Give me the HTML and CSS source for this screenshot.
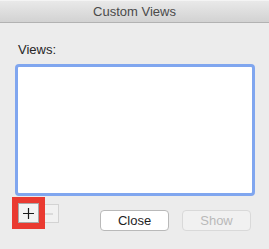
FILE: index.html
```html
<!DOCTYPE html>
<html lang="en">
<head>
    <meta charset="UTF-8">
    <meta name="viewport" content="width=device-width, initial-scale=1.0">
    <title>Custom Views</title>
    <link rel="stylesheet" href="styles.css">
</head>
<body>
    <div class="window">
        <div class="titlebar">Custom Views</div>
        <div class="content">
            <div class="label">Views:</div>
            <div class="list-box"></div>
            <div class="footer">
                <div class="segmented">
                    <button class="seg-btn add">
                        <svg width="11" height="11" viewBox="0 0 11 11">
                            <path d="M5.5 0V11M0 5.5H11" stroke="#1a1a1a" stroke-width="1.2" fill="none"/>
                        </svg>
                    </button>
                    <button class="seg-btn remove" disabled>
                        <svg width="8" height="2" viewBox="0 0 8 2">
                            <path d="M0 1H8" stroke="#c4c4c4" stroke-width="1" fill="none"/>
                        </svg>
                    </button>
                </div>
                <div class="buttons">
                    <button class="push">Close</button>
                    <button class="push" disabled>Show</button>
                </div>
            </div>
        </div>
    </div>
</body>
</html>
```

FILE: styles.css
```css
body {
    margin: 0;
    padding: 0;
    font-family: "Liberation Sans", Arial, sans-serif;
    background: #ececec;
}
.window {
    width: 269px;
    height: 249px;
    background: #ececec;
    overflow: hidden;
}
.titlebar {
    height: 21px;
    line-height: 22px;
    text-align: center;
    font-size: 13px;
    color: #4a4a4a;
    background: linear-gradient(#e9e9e9, #d2d2d2);
    border-top: 1px solid #f4f4f4;
    border-bottom: 1px solid #b2b2b2;
    box-sizing: border-box;
    height: 23px;
}
.content {
    padding: 0 14px 0 15px;
}
.label {
    margin-top: 19px;
    height: 16px;
    line-height: 16px;
    padding-left: 3px;
    font-size: 13px;
    color: #262626;
}
.list-box {
    margin-top: 6px;
    width: 240px;
    height: 132px;
    box-sizing: border-box;
    border: 3px solid #80a6ef;
    border-radius: 4px;
    background: #ffffff;
}
.footer {
    display: flex;
    align-items: flex-start;
}
.segmented {
    display: flex;
    margin-top: 7px;
    margin-left: 3px;
}
.seg-btn {
    display: flex;
    align-items: center;
    justify-content: center;
    padding: 0;
    width: 21px;
    height: 20px;
    border: 1px solid #a9a9a9;
    background: #f3f3f3;
}
.seg-btn.add {
    outline: 6px solid #ea3a31;
    position: relative;
    z-index: 1;
}
.seg-btn.remove {
    width: 20px;
    height: 19px;
    margin-top: 1px;
    border-color: #d3d3d3;
    border-left: none;
    background: #f1f1f1;
}
.buttons {
    display: flex;
    gap: 13px;
    margin-top: 14px;
    margin-left: auto;
    margin-right: 4px;
}
.push {
    width: 69px;
    height: 21px;
    padding: 0;
    font-family: "Liberation Sans", Arial, sans-serif;
    font-size: 13px;
    color: #1e1e1e;
    background: #ffffff;
    border: 1px solid #b9b9b9;
    border-radius: 4px;
}
.push:disabled {
    color: #b9b9b9;
    background: #f1f1f1;
    border-color: #d9d9d9;
}
```
